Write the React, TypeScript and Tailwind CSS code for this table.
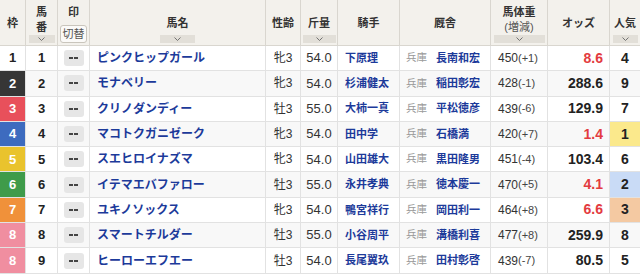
import React from 'react';

interface Horse {
  waku: number;
  umaban: number;
  name: string;
  sexAge: string;
  weight: string;
  jockey: string;
  trainer: string;
  body: string;
  diff: string;
  odds: string;
  pop: number;
}

const horses: Horse[] = [
  { waku: 1, umaban: 1, name: 'ピンクヒップガール', sexAge: '牝3', weight: '54.0', jockey: '下原理', trainer: '長南和宏', body: '450', diff: '(+1)', odds: '8.6', pop: 4 },
  { waku: 2, umaban: 2, name: 'モナベリー', sexAge: '牝3', weight: '54.0', jockey: '杉浦健太', trainer: '稲田彰宏', body: '428', diff: '(-1)', odds: '288.6', pop: 9 },
  { waku: 3, umaban: 3, name: 'クリノダンディー', sexAge: '牡3', weight: '55.0', jockey: '大柿一真', trainer: '平松徳彦', body: '439', diff: '(-6)', odds: '129.9', pop: 7 },
  { waku: 4, umaban: 4, name: 'マコトクガニゼーク', sexAge: '牝3', weight: '54.0', jockey: '田中学', trainer: '石橋満', body: '420', diff: '(+7)', odds: '1.4', pop: 1 },
  { waku: 5, umaban: 5, name: 'スエヒロイナズマ', sexAge: '牝3', weight: '54.0', jockey: '山田雄大', trainer: '黒田隆男', body: '451', diff: '(-4)', odds: '103.4', pop: 6 },
  { waku: 6, umaban: 6, name: 'イテマエバファロー', sexAge: '牡3', weight: '55.0', jockey: '永井孝典', trainer: '徳本慶一', body: '470', diff: '(+5)', odds: '4.1', pop: 2 },
  { waku: 7, umaban: 7, name: 'ユキノソックス', sexAge: '牝3', weight: '54.0', jockey: '鴨宮祥行', trainer: '岡田利一', body: '464', diff: '(+8)', odds: '6.6', pop: 3 },
  { waku: 8, umaban: 8, name: 'スマートチルダー', sexAge: '牡3', weight: '55.0', jockey: '小谷周平', trainer: '溝橋利喜', body: '477', diff: '(+8)', odds: '259.9', pop: 8 },
  { waku: 8, umaban: 9, name: 'ヒーローエフエー', sexAge: '牡3', weight: '54.0', jockey: '長尾翼玖', trainer: '田村彰啓', body: '439', diff: '(-7)', odds: '80.5', pop: 5 },
];

const wakuClass: Record<number, string> = {
  1: 'bg-white text-[#222]',
  2: 'bg-[#363636] text-white',
  3: 'bg-[#e8505b] text-white',
  4: 'bg-[#3d6bbf] text-white',
  5: 'bg-[#e9c32d] text-white',
  6: 'bg-[#3f9b4a] text-white',
  7: 'bg-[#f0913a] text-white',
  8: 'bg-[#f08ea0] text-white',
};

const popClass: Record<number, string> = {
  1: 'bg-[#fbe98c]',
  2: 'bg-[#c9dbf6]',
  3: 'bg-[#f4c9a2]',
};

const cols = 'grid grid-cols-[26px_32px_32px_176px_35px_37px_62px_91px_57px_62px_30px]';

function SortBar({ w }: { w: string }) {
  return (
    <div className={`mt-auto mb-[2px] h-[8px] ${w} bg-[#e2dfd8] flex items-center justify-center`}>
      <svg width="7" height="4" viewBox="0 0 7 4" fill="none">
        <path d="M0.5 0.5 L3.5 3.5 L6.5 0.5" stroke="#666" strokeWidth="0.9" />
      </svg>
    </div>
  );
}

function Th({ children, sort, w, twoLine, last }: { children: React.ReactNode; sort?: boolean; w?: string; twoLine?: boolean; last?: boolean }) {
  return (
    <div className={`h-full flex flex-col items-center ${twoLine ? 'pt-[5px] leading-[15px]' : 'pt-[16px] leading-[14px]'} ${last ? '' : 'border-r border-[#d9d6cf]'}`}>
      <div className="text-center">{children}</div>
      {sort && <SortBar w={w ?? 'w-[26px]'} />}
    </div>
  );
}

export default function App() {
  return (
    <div className="w-[640px] h-[275px] overflow-hidden bg-white text-[#222]" style={{ fontFamily: '"Liberation Sans", "Noto Sans CJK JP", sans-serif' }}>
      <div className={`${cols} h-[46px] bg-[#f3f1ec] border-b border-[#d9d6cf] text-[11px] font-bold text-[#333]`}>
        <Th>枠</Th>
        <Th twoLine sort w="w-[26px]">
          <div>馬</div>
          <div>番</div>
        </Th>
        <div className="h-full flex flex-col items-center pt-[5px] leading-[15px] border-r border-[#d9d6cf]">
          <div>印</div>
          <div className="mt-[5px] h-[18px] w-[27px] rounded-[3px] border border-[#c9c5bc] bg-[#fbfaf8] text-[11px] font-normal text-[#555] flex items-center justify-center">
            切替
          </div>
        </div>
        <Th sort w="w-[35px]">馬名</Th>
        <Th>性齢</Th>
        <Th sort w="w-[33px]">斤量</Th>
        <Th>騎手</Th>
        <Th>厩舎</Th>
        <Th twoLine sort w="w-[51px]">
          <div>馬体重</div>
          <div className="font-normal text-[#555]">(増減)</div>
        </Th>
        <Th>オッズ</Th>
        <Th sort w="w-[25px]" last>人気</Th>
      </div>

      {horses.map((h, i) => (
        <div key={h.umaban} className={`${cols} h-[25.3px] border-b border-[#e2e2e2] ${i % 2 === 1 ? 'bg-[#f8f8f8]' : 'bg-white'}`}>
          <div className={`flex items-center justify-center border-r border-[#e2e2e2] text-[13px] font-bold ${wakuClass[h.waku]}`}>{h.waku}</div>
          <div className="flex items-center justify-center border-r border-[#e2e2e2] text-[13px] font-bold text-[#222]">{h.umaban}</div>
          <div className="flex items-center justify-center border-r border-[#e2e2e2]">
            <div className="w-[20px] h-[16px] rounded-[3px] bg-[#e6e6e6] flex items-center justify-center gap-[1px]">
              <span className="w-[4px] h-[2px] bg-[#444]" />
              <span className="w-[4px] h-[2px] bg-[#444]" />
            </div>
          </div>
          <div className="flex items-center pl-[7px] border-r border-[#e2e2e2] text-[12px] font-bold text-[#1c3a9a] whitespace-nowrap">{h.name}</div>
          <div className="flex items-center justify-center border-r border-[#e2e2e2] text-[12px] text-[#333]">{h.sexAge}</div>
          <div className="flex items-center justify-center border-r border-[#e2e2e2] text-[13px] text-[#333]">{h.weight}</div>
          <div className="flex items-center pl-[7px] border-r border-[#e2e2e2] text-[11px] font-bold text-[#1c3a9a] whitespace-nowrap">{h.jockey}</div>
          <div className="flex items-center pl-[6px] border-r border-[#e2e2e2] whitespace-nowrap">
            <span className="text-[10.5px] text-[#999]">兵庫</span>
            <span className="ml-[9px] text-[11px] font-bold text-[#1c3a9a]">{h.trainer}</span>
          </div>
          <div className="flex items-center pl-[7px] border-r border-[#e2e2e2] text-[12px] text-[#333] whitespace-nowrap">
            {h.body}
            <span className="text-[11px] text-[#444]">{h.diff}</span>
          </div>
          <div className={`flex items-center justify-end pr-[6px] border-r border-[#e2e2e2] text-[14px] font-bold ${parseFloat(h.odds) < 10 ? 'text-[#e33b40]' : 'text-[#222]'}`}>{h.odds}</div>
          <div className={`flex items-center justify-center text-[14px] font-bold text-[#222] ${popClass[h.pop] ?? ''}`}>{h.pop}</div>
        </div>
      ))}
    </div>
  );
}
